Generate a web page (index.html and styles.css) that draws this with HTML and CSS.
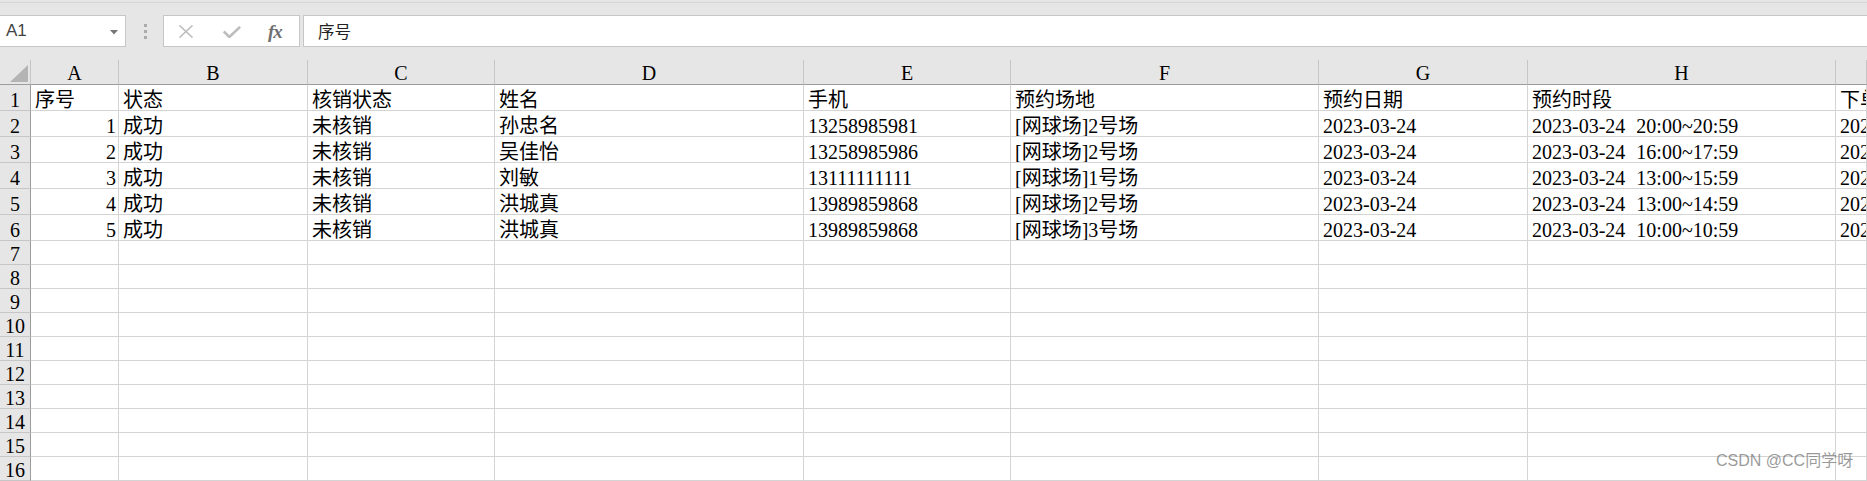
FILE: index.html
```html
<!DOCTYPE html>
<html lang="zh-CN">
<head>
<meta charset="utf-8">
<title>Sheet</title>
<link rel="stylesheet" href="styles.css">
</head>
<body>
<div class="topband"><div class="topline"></div></div>
<div class="fbar">
  <div class="namebox">
    <span class="nb-text">A1</span>
    <svg class="nb-arrow" width="8" height="5" viewBox="0 0 8 5"><polygon points="0,0 8,0 4,4.5" fill="#777"/></svg>
  </div>
  <div class="grip"><i></i><i></i><i></i></div>
  <div class="fbtns">
    <svg class="ic-x" width="16" height="13" viewBox="0 0 16 13"><path d="M1.5 0.5 L14.5 12.5 M14.5 0.5 L1.5 12.5" stroke="#bdbdbd" stroke-width="1.6" fill="none"/></svg>
    <svg class="ic-ok" width="18" height="12" viewBox="0 0 18 12"><path d="M0.8 5.5 L6.3 11 L17.2 0.8" stroke="#bdbdbd" stroke-width="2.6" fill="none"/></svg>
    <span class="ic-fx">fx</span>
  </div>
  <div class="finput">序号</div>
</div>
<div class="gap"></div>
<div class="sheet">
  <div class="row hdr">
    <div class="corner"><svg width="18" height="17" viewBox="0 0 18 17"><polygon points="18,0 18,17 0,17" fill="#b4b4b4"/></svg></div>
    <div class="ch">A</div><div class="ch">B</div><div class="ch">C</div><div class="ch">D</div><div class="ch">E</div><div class="ch">F</div><div class="ch">G</div><div class="ch">H</div><div class="ch"></div>
  </div>
  <div class="row r26">
    <div class="rh">1</div>
    <div class="c">序号</div><div class="c">状态</div><div class="c">核销状态</div><div class="c">姓名</div><div class="c">手机</div><div class="c">预约场地</div><div class="c">预约日期</div><div class="c">预约时段</div><div class="c">下单时间</div>
  </div>
  <div class="row r26">
    <div class="rh">2</div>
    <div class="c num">1</div><div class="c">成功</div><div class="c">未核销</div><div class="c">孙忠名</div><div class="c">13258985981</div><div class="c">[网球场]2号场</div><div class="c">2023-03-24</div><div class="c">2023-03-24 20:00~20:59</div><div class="c">2023-03-23 18:12:05</div>
  </div>
  <div class="row r26">
    <div class="rh">3</div>
    <div class="c num">2</div><div class="c">成功</div><div class="c">未核销</div><div class="c">吴佳怡</div><div class="c">13258985986</div><div class="c">[网球场]2号场</div><div class="c">2023-03-24</div><div class="c">2023-03-24 16:00~17:59</div><div class="c">2023-03-23 17:40:11</div>
  </div>
  <div class="row r26">
    <div class="rh">4</div>
    <div class="c num">3</div><div class="c">成功</div><div class="c">未核销</div><div class="c">刘敏</div><div class="c">13111111111</div><div class="c">[网球场]1号场</div><div class="c">2023-03-24</div><div class="c">2023-03-24 13:00~15:59</div><div class="c">2023-03-23 16:22:47</div>
  </div>
  <div class="row r26">
    <div class="rh">5</div>
    <div class="c num">4</div><div class="c">成功</div><div class="c">未核销</div><div class="c">洪城真</div><div class="c">13989859868</div><div class="c">[网球场]2号场</div><div class="c">2023-03-24</div><div class="c">2023-03-24 13:00~14:59</div><div class="c">2023-03-23 15:08:30</div>
  </div>
  <div class="row r26">
    <div class="rh">6</div>
    <div class="c num">5</div><div class="c">成功</div><div class="c">未核销</div><div class="c">洪城真</div><div class="c">13989859868</div><div class="c">[网球场]3号场</div><div class="c">2023-03-24</div><div class="c">2023-03-24 10:00~10:59</div><div class="c">2023-03-23 14:55:19</div>
  </div>
  <div class="row r24"><div class="rh">7</div><div class="c"></div><div class="c"></div><div class="c"></div><div class="c"></div><div class="c"></div><div class="c"></div><div class="c"></div><div class="c"></div><div class="c"></div></div>
  <div class="row r24"><div class="rh">8</div><div class="c"></div><div class="c"></div><div class="c"></div><div class="c"></div><div class="c"></div><div class="c"></div><div class="c"></div><div class="c"></div><div class="c"></div></div>
  <div class="row r24"><div class="rh">9</div><div class="c"></div><div class="c"></div><div class="c"></div><div class="c"></div><div class="c"></div><div class="c"></div><div class="c"></div><div class="c"></div><div class="c"></div></div>
  <div class="row r24"><div class="rh">10</div><div class="c"></div><div class="c"></div><div class="c"></div><div class="c"></div><div class="c"></div><div class="c"></div><div class="c"></div><div class="c"></div><div class="c"></div></div>
  <div class="row r24"><div class="rh">11</div><div class="c"></div><div class="c"></div><div class="c"></div><div class="c"></div><div class="c"></div><div class="c"></div><div class="c"></div><div class="c"></div><div class="c"></div></div>
  <div class="row r24"><div class="rh">12</div><div class="c"></div><div class="c"></div><div class="c"></div><div class="c"></div><div class="c"></div><div class="c"></div><div class="c"></div><div class="c"></div><div class="c"></div></div>
  <div class="row r24"><div class="rh">13</div><div class="c"></div><div class="c"></div><div class="c"></div><div class="c"></div><div class="c"></div><div class="c"></div><div class="c"></div><div class="c"></div><div class="c"></div></div>
  <div class="row r24"><div class="rh">14</div><div class="c"></div><div class="c"></div><div class="c"></div><div class="c"></div><div class="c"></div><div class="c"></div><div class="c"></div><div class="c"></div><div class="c"></div></div>
  <div class="row r24"><div class="rh">15</div><div class="c"></div><div class="c"></div><div class="c"></div><div class="c"></div><div class="c"></div><div class="c"></div><div class="c"></div><div class="c"></div><div class="c"></div></div>
  <div class="row r24"><div class="rh">16</div><div class="c"></div><div class="c"></div><div class="c"></div><div class="c"></div><div class="c"></div><div class="c"></div><div class="c"></div><div class="c"></div><div class="c"></div></div>
</div>
<div class="watermark">CSDN @CC同学呀</div>
</body>
</html>
```
FILE: styles.css
```css
* { box-sizing: border-box; }
html, body {
  margin: 0;
  padding: 0;
}
body {
  width: 1867px;
  height: 481px;
  overflow: hidden;
  position: relative;
  background: #e6e6e6;
  font-family: "Liberation Serif", "Noto Sans CJK SC", serif;
  color: #000;
}
.topband {
  height: 15px;
  background: #e6e6e6;
  padding-top: 2px;
}
.topline {
  height: 1px;
  background: #d6d6d6;
}
.fbar {
  height: 32px;
  display: flex;
  align-items: stretch;
  background: #e6e6e6;
}
.namebox {
  width: 126px;
  background: #fff;
  border: 1px solid #c6c6c6;
  border-left: none;
  display: flex;
  align-items: center;
  padding-left: 6px;
  padding-right: 7px;
  font-family: "Liberation Sans", "Noto Sans", sans-serif;
  font-size: 17px;
  color: #444;
}
.nb-text { flex: 1; }
.nb-arrow { display: block; margin-top: 2px; }
.grip {
  width: 37px;
  display: flex;
  flex-direction: column;
  align-items: center;
  justify-content: center;
  gap: 3px;
  padding-left: 2px;
}
.grip i {
  display: block;
  width: 3px;
  height: 3px;
  background: #ababab;
}
.fbtns {
  width: 137px;
  background: #fff;
  border: 1px solid #c6c6c6;
  display: flex;
  align-items: center;
  padding-left: 14px;
}
.ic-x { display: block; }
.ic-ok { display: block; margin-left: 29px; margin-top: 2px; }
.ic-fx {
  margin-left: 27px;
  font-family: "Liberation Serif", serif;
  font-style: italic;
  font-weight: bold;
  font-size: 19px;
  color: #707070;
  line-height: 1;
  letter-spacing: -1px;
}
.finput {
  flex: 1;
  margin-left: 3px;
  background: #fff;
  border: 1px solid #c6c6c6;
  border-right: none;
  display: flex;
  align-items: center;
  padding-left: 14px;
  font-family: "Noto Sans CJK SC", sans-serif;
  font-size: 16.5px;
  color: #222;
}
.gap { height: 13px; }
.sheet { background: #fff; }
.row {
  display: grid;
  grid-template-columns: 31px 88px 189px 187px 309px 207px 308px 209px 308px 1fr;
}
.hdr { height: 25px; background: #e6e6e6; }
.r26 { height: 26px; }
.r24 { height: 24px; }
.corner {
  background: #e6e6e6;
  border-right: 1px solid #c6c6c6;
  border-bottom: 1px solid #9c9c9c;
  display: flex;
  justify-content: flex-end;
  align-items: flex-end;
  padding: 0 2px 2px 0;
}
.corner svg { display: block; }
.ch {
  background: #e6e6e6;
  border-right: 1px solid #c6c6c6;
  border-bottom: 1px solid #9c9c9c;
  text-align: center;
  font-size: 20px;
  line-height: 24px;
  padding-top: 1px;
  overflow: hidden;
}
.rh {
  background: #e6e6e6;
  border-right: 1px solid #9c9c9c;
  border-bottom: 1px solid #c6c6c6;
  display: flex;
  justify-content: center;
  align-items: flex-end;
  font-size: 20px;
  line-height: 20px;
}
.c {
  background: #fff;
  border-right: 1px solid #d4d4d4;
  border-bottom: 1px solid #d4d4d4;
  display: flex;
  align-items: flex-end;
  padding-left: 4px;
  font-size: 20px;
  line-height: 20px;
  white-space: pre;
  word-spacing: 6px;
  overflow: hidden;
}
.num {
  justify-content: flex-end;
  padding-left: 0;
  padding-right: 2px;
}
.watermark {
  position: absolute;
  left: 1716px;
  top: 451px;
  font-family: "Liberation Sans", "Noto Sans CJK SC", sans-serif;
  font-size: 16px;
  line-height: 20px;
  color: rgba(120, 120, 120, 0.75);
  white-space: nowrap;
}
```
